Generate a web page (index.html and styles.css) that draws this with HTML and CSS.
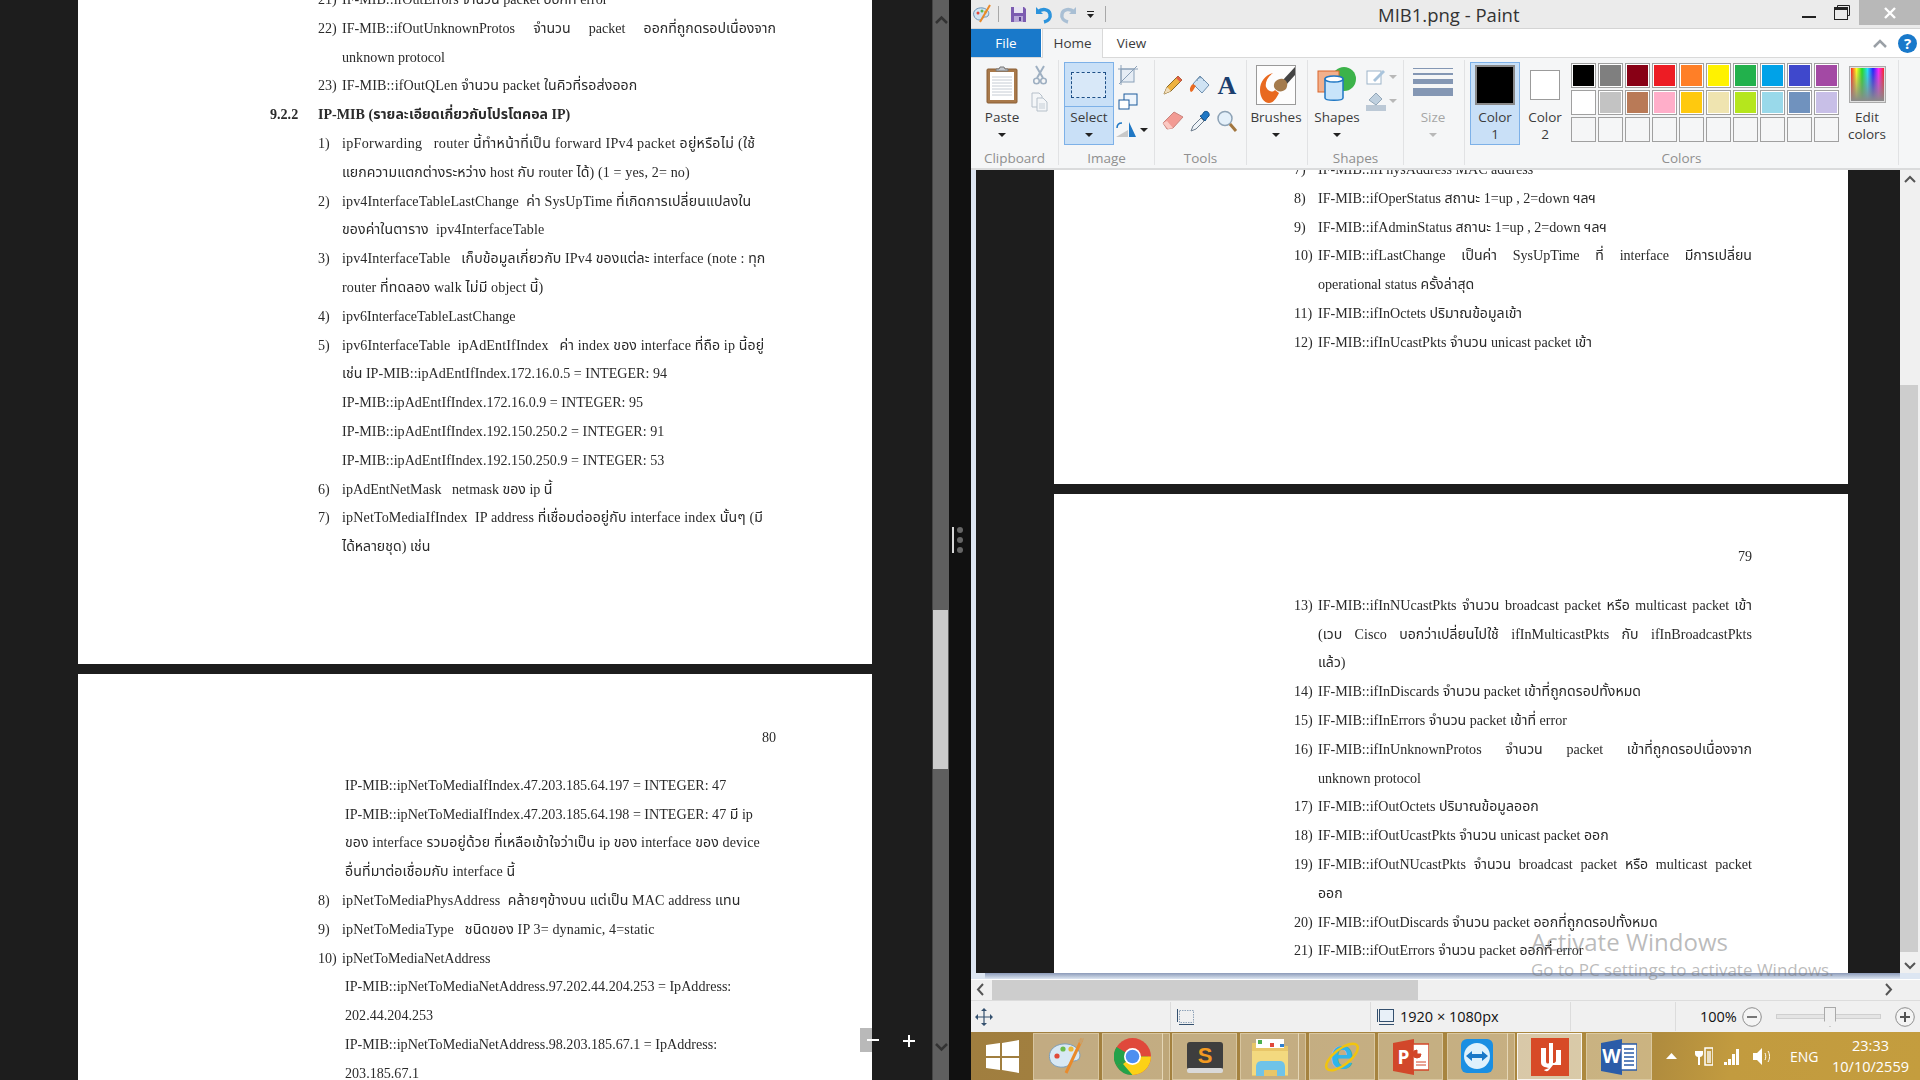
FILE: index.html
```html
<!doctype html>
<html>

<head>
    <title>MIB1.png - Paint</title>
    <meta charset="UTF-8">
    <link rel="stylesheet" href="styles.css">
</head>

<body>
    <div class="desk">
        <!-- pdf reader on the left half -->
        <section class="reader">
            <div class="reader-doc">
                <div class="page page-a">
                    <div class="ln"><span class="no">21)</span><span class="tx">IF-MIB::ifOutErrors จำนวน packet ออกที่ error</span></div>
                    <div class="ln"><span class="no">22)</span><span class="tx just">IF-MIB::ifOutUnknownProtos จำนวน packet ออกที่ถูกดรอปเนื่องจาก</span></div>
                    <div class="ln cont">unknown protocol</div>
                    <div class="ln w2"><span class="no">23)</span><span class="tx">IF-MIB::ifOutQLen จำนวน packet ในคิวที่รอส่งออก</span></div>
                    <div class="ln head"><span class="sec">9.2.2</span><span class="tx">IP-MIB (รายละเอียดเกี่ยวกับโปรโตคอล IP)</span></div>
                    <div class="ln w1"><span class="no">1)</span><span class="tx">ipForwarding   router นี้ทำหน้าที่เป็น forward IPv4 packet อยู่หรือไม่ (ใช้</span></div>
                    <div class="ln cont w2">แยกความแตกต่างระหว่าง host กับ router ได้) (1 = yes, 2= no)</div>
                    <div class="ln w2"><span class="no">2)</span><span class="tx">ipv4InterfaceTableLastChange  ค่า SysUpTime ที่เกิดการเปลี่ยนแปลงใน</span></div>
                    <div class="ln cont w2">ของค่าในตาราง  ipv4InterfaceTable</div>
                    <div class="ln w2"><span class="no">3)</span><span class="tx">ipv4InterfaceTable   เก็บข้อมูลเกี่ยวกับ IPv4 ของแต่ละ interface (note : ทุก</span></div>
                    <div class="ln cont w2">router ที่ทดลอง walk ไม่มี object นี้)</div>
                    <div class="ln"><span class="no">4)</span><span class="tx">ipv6InterfaceTableLastChange</span></div>
                    <div class="ln w2"><span class="no">5)</span><span class="tx">ipv6InterfaceTable  ipAdEntIfIndex   ค่า index ของ interface ที่ถือ ip นี้อยู่</span></div>
                    <div class="ln cont">เช่น IP-MIB::ipAdEntIfIndex.172.16.0.5 = INTEGER: 94</div>
                    <div class="ln cont">IP-MIB::ipAdEntIfIndex.172.16.0.9 = INTEGER: 95</div>
                    <div class="ln cont">IP-MIB::ipAdEntIfIndex.192.150.250.2 = INTEGER: 91</div>
                    <div class="ln cont">IP-MIB::ipAdEntIfIndex.192.150.250.9 = INTEGER: 53</div>
                    <div class="ln"><span class="no">6)</span><span class="tx">ipAdEntNetMask   netmask ของ ip นี้</span></div>
                    <div class="ln w2"><span class="no">7)</span><span class="tx">ipNetToMediaIfIndex  IP address ที่เชื่อมต่ออยู่กับ interface index นั้นๆ (มี</span></div>
                    <div class="ln cont">ได้หลายชุด) เช่น</div>
                </div>
                <div class="page page-b">
                    <div class="pageno">80</div>
                    <div class="ln sub">IP-MIB::ipNetToMediaIfIndex.47.203.185.64.197 = INTEGER: 47</div>
                    <div class="ln sub">IP-MIB::ipNetToMediaIfIndex.47.203.185.64.198 = INTEGER: 47 มี ip</div>
                    <div class="ln sub w2">ของ interface รวมอยู่ด้วย ที่เหลือเข้าใจว่าเป็น ip ของ interface ของ device</div>
                    <div class="ln sub w2">อื่นที่มาต่อเชื่อมกับ interface นี้</div>
                    <div class="ln w2"><span class="no">8)</span><span class="tx">ipNetToMediaPhysAddress  คล้ายๆข้างบน แต่เป็น MAC address แทน</span></div>
                    <div class="ln w2"><span class="no">9)</span><span class="tx">ipNetToMediaType   ชนิดของ IP 3= dynamic, 4=static</span></div>
                    <div class="ln"><span class="no">10)</span><span class="tx">ipNetToMediaNetAddress</span></div>
                    <div class="ln sub">IP-MIB::ipNetToMediaNetAddress.97.202.44.204.253 = IpAddress:</div>
                    <div class="ln sub">202.44.204.253</div>
                    <div class="ln sub">IP-MIB::ipNetToMediaNetAddress.98.203.185.67.1 = IpAddress:</div>
                    <div class="ln sub">203.185.67.1</div>
                </div>
                <div class="zoom-tools">
                    <span class="zoom-minus"></span>
                    <span class="zoom-plus"></span>
                </div>
            </div>
            <div class="reader-bar">
                <svg class="bar-up" width="17" height="12" viewBox="0 0 17 12"><path d="M3 9l5.500-5.500L14 9" fill="none" stroke="#333" stroke-width="2.500"/></svg>
                <div class="reader-thumb"></div>
                <svg class="bar-down" width="17" height="12" viewBox="0 0 17 12"><path d="M3 3l5.500 5.500L14 3" fill="none" stroke="#333" stroke-width="2.500"/></svg>
            </div>
            <div class="splitter">
                <span class="split-line"></span>
                <span class="split-dots"><i></i><i></i><i></i></span>
            </div>
        </section>

        <!-- paint window -->
        <section class="paint">
            <div class="titlebar">
                <div class="qat">
                    <svg width="20" height="20" viewBox="0 0 20 20"><path d="M2 12c-2-5 3-9 9-8 5 1 7 5 5 8-2 2-4 0-5 2-1 3-7 3-9-2z" fill="#cfe3f2" stroke="#6d93b5"/><circle cx="6" cy="9" r="1.500" fill="#e3483a"/><circle cx="10" cy="7" r="1.500" fill="#5cb84e"/><circle cx="13.500" cy="8" r="1.500" fill="#e8b93a"/><path d="M18 1L8 18" stroke="#e98a2b" stroke-width="2"/></svg>
                    <span class="qat-sep sep-a"></span>
                    <svg class="q-save" width="17" height="17" viewBox="0 0 17 17"><path d="M1 1h13l2 2v13H1z" fill="#7c5cb0"/><rect x="4" y="1" width="9" height="6" fill="#e8e4f2"/><rect x="4" y="10" width="9" height="6" fill="#b9a8d8"/><rect x="9" y="11" width="2" height="4" fill="#5a4390"/></svg>
                    <svg class="q-undo" width="19" height="19" viewBox="0 0 19 19"><path d="M2 2v7h7" fill="#2b93dc"/><path d="M4 7c4-4 11-3 12 2 1 4-2 7-6 8" fill="none" stroke="#2b93dc" stroke-width="3.500"/></svg>
                    <svg class="q-redo" width="19" height="19" viewBox="0 0 19 19"><path d="M17 2v7h-7" fill="#a9bfd4"/><path d="M15 7c-4-4-11-3-12 2-1 4 2 7 6 8" fill="none" stroke="#a9bfd4" stroke-width="3.500"/></svg>
                    <svg class="q-drop" width="9" height="9" viewBox="0 0 9 9"><path d="M1 1h7v1H1zM1 4h7L4.500 8z" fill="#222"/></svg>
                    <span class="qat-sep sep-b"></span>
                </div>
                <div class="title">MIB1.png - Paint</div>
                <div class="winbtns">
                    <span class="w-min"></span>
                    <svg class="w-max" width="16" height="15" viewBox="0 0 16 15"><path d="M3.500 2.500V.5h12v10h-2" fill="none" stroke="#222"/><rect x=".5" y="2.500" width="13" height="12" fill="none" stroke="#222"/><rect y="2" width="14" height="3" fill="#222"/></svg>
                    <span class="w-close"><svg width="12" height="12" viewBox="0 0 12 12"><path d="M1 1l10 10M11 1L1 11" stroke="#fff" stroke-width="2.400"/></svg></span>
                </div>
            </div>

            <div class="tabs">
                <span class="tab tab-file">File</span>
                <span class="tab tab-home">Home</span>
                <span class="tab tab-view">View</span>
                <span class="tab-right">
                    <svg width="14" height="9" viewBox="0 0 14 9"><path d="M1 8l6-6 6 6" fill="none" stroke="#9aa0a6" stroke-width="2.500"/></svg>
                    <span class="help">?</span>
                </span>
            </div>

            <div class="ribbon">
                <div class="group g-clip">
                    <div class="group-body">
                        <div class="big big-paste">
                            <svg width="32" height="38" viewBox="0 0 32 38"><rect x="1" y="3" width="30" height="34" rx="1" fill="#a9794a" stroke="#8a5e34"/><rect x="4" y="6" width="24" height="28" fill="#fff"/><path d="M6 11h20M6 14h20M6 17h20M6 20h20M6 23h20M6 26h20M6 29h20" stroke="#c6ccd4"/><path d="M10 5h12V3h-3l-1-2h-4l-1 2h-3z" fill="#c2c6cc" stroke="#777"/></svg>
                            <span class="lbl">Paste</span><span class="caret"></span>
                        </div>
                        <div class="stack">
                            <svg width="14" height="20" viewBox="0 0 14 20"><path d="M3 1l7 12M11 1L4 13" stroke="#9fb0c2" stroke-width="2"/><circle cx="3.500" cy="16" r="2.800" fill="none" stroke="#9fb0c2" stroke-width="1.600"/><circle cx="10.500" cy="16" r="2.800" fill="none" stroke="#9fb0c2" stroke-width="1.600"/></svg>
                            <svg width="17" height="20" viewBox="0 0 17 20"><path d="M1 1h7l3 3v11H1z" fill="#f4f6f8" stroke="#b6c0ca"/><path d="M6 6h6l4 4v9H6z" fill="#f4f6f8" stroke="#b6c0ca"/><path d="M8 12h6M8 14h6M8 16h6" stroke="#c5ced6"/></svg>
                        </div>
                    </div>
                    <div class="group-label">Clipboard</div>
                </div>

                <div class="group g-image">
                    <div class="group-body">
                        <div class="select-btn">
                            <div class="select-top"><span class="marquee"></span></div>
                            <div class="select-low"><span class="lbl">Select</span><span class="caret"></span></div>
                        </div>
                        <div class="stack image-stack">
                            <svg width="20" height="20" viewBox="0 0 20 20"><rect x="3" y="4" width="13" height="13" fill="#e6edf5" stroke="#8aa0b8"/><path d="M0 4h20M3 0v20M1 19L19 1" stroke="#8aa0b8"/></svg>
                            <svg width="20" height="18" viewBox="0 0 20 18"><rect x="6" y="1" width="13" height="11" fill="#eef5fc" stroke="#1d5b9c"/><rect x="1" y="7" width="10" height="9" fill="#fff" stroke="#1d5b9c"/></svg>
                            <div class="rotate"><svg width="22" height="17" viewBox="0 0 22 17"><path d="M1 16l12-7v7z" fill="#c8c8c8"/><path d="M14 16V1l7 15z" fill="#1f77c4"/><path d="M2 7c0-3 2-5 5-5" stroke="#1f77c4" fill="none" stroke-width="1.500"/></svg><span class="caret"></span></div>
                        </div>
                    </div>
                    <div class="group-label">Image</div>
                </div>

                <div class="group g-tools">
                    <div class="group-body tools-grid">
                        <svg width="22" height="22" viewBox="0 0 22 22"><path d="M2 20l3-7L16 2l4 4L9 17z" fill="#eeb23f" stroke="#8a6a2a"/><path d="M16 2l4 4-2 2-4-4z" fill="#e35d4a"/><path d="M2 20l3-7 4 4z" fill="#f1ddba"/></svg>
                        <svg width="22" height="22" viewBox="0 0 22 22"><path d="M11 2l9 9-7 8-9-9z" fill="#cfe3f4" stroke="#6e8fae"/><path d="M4 10c-3 2-4 6-2 8 2 0 3-4 5-6z" fill="#ea6b22"/><path d="M8 7c0-4 6-5 7 0" fill="none" stroke="#6e8fae"/></svg>
                        <svg class="tool-a-box" width="22" height="22" viewBox="0 0 22 22"><text x="11" y="20" text-anchor="middle" class="tool-a">A</text></svg>
                        <svg width="22" height="20" viewBox="0 0 22 20"><path d="M1 13L12 2l9 5-10 11-6 1z" fill="#f29b94" stroke="#c9837c"/><path d="M1 13l5 6 5-1-6-7z" fill="#fbc9c3"/></svg>
                        <svg width="22" height="22" viewBox="0 0 22 22"><path d="M2 21l2-5 8-8 3 3-8 8z" fill="#eef3f8" stroke="#6c7c8c"/><path d="M11 6l5 5 2-3 2-2c1-3-2-6-5-4l-2 3z" fill="#1f77c4" stroke="#17568f"/></svg>
                        <svg width="22" height="22" viewBox="0 0 22 22"><circle cx="9" cy="8.500" r="7" fill="#e4f0fa" stroke="#8ea3b6" stroke-width="1.500"/><path d="M14 14l6 7" stroke="#a2763f" stroke-width="3"/></svg>
                    </div>
                    <div class="group-label">Tools</div>
                </div>

                <div class="group g-brush">
                    <div class="group-body">
                        <div class="big">
                            <svg width="40" height="40" viewBox="0 0 40 40"><rect x=".5" y=".5" width="39" height="39" fill="#fdfdfd" stroke="#9a9a9a"/><path d="M39 2L26 16l4 4 9-10z" fill="#444"/><path d="M4 25c0-9 6-15 13-17-6 4-8 10-7 14 3 6 8 5 9 3l4 3c-3 6-6 10-10 10-5 0-9-6-9-13z" fill="#e8691f"/><path d="M18 22c-1-5 4-9 9-8 5 2 5 6 3 10-4 4-10 3-12-2z" fill="#a47b4d"/></svg>
                            <span class="lbl">Brushes</span><span class="caret"></span>
                        </div>
                    </div>
                </div>

                <div class="group g-shapes">
                    <div class="group-body">
                        <div class="big">
                            <svg width="40" height="38" viewBox="0 0 40 38"><circle cx="27" cy="13" r="12" fill="#3cb34a"/><rect x="1" y="5" width="21" height="21" fill="#f2b08c" stroke="#d9642a"/><path d="M8 13v19c0 3 18 3 18 0V13z" fill="#c8e4fa" stroke="#1f77c4" stroke-width="1.500"/><ellipse cx="17" cy="13" rx="9" ry="3" fill="#fff" stroke="#1f77c4" stroke-width="1.500"/></svg>
                            <span class="lbl">Shapes</span><span class="caret"></span>
                        </div>
                        <div class="stack shape-stack">
                            <div class="row"><svg width="20" height="17" viewBox="0 0 20 17"><rect x="1" y="3" width="14" height="13" fill="#fff" stroke="#9db4c9"/><path d="M7 12L17 2l2 2L9 14z" fill="#a9c4dc"/></svg><span class="caret dim"></span></div>
                            <div class="row"><svg width="20" height="20" viewBox="0 0 20 20"><rect x="0" y="14" width="20" height="6" fill="#bcc9d6"/><path d="M3 9l7-7 6 6-6 6z" fill="#bfd0df" stroke="#93a7b8"/></svg><span class="caret dim"></span></div>
                        </div>
                    </div>
                    <div class="group-label">Shapes</div>
                </div>

                <div class="group g-size">
                    <div class="group-body">
                        <div class="big dimmed">
                            <div class="size-lines"><i></i><i></i><i></i><i></i></div>
                            <span class="lbl">Size</span><span class="caret dim"></span>
                        </div>
                    </div>
                </div>

                <div class="group g-colors">
                    <div class="group-body">
                        <div class="colorbtn on">
                            <span class="chip chip-1"></span>
                            <span class="lbl">Color<br>1</span>
                        </div>
                        <div class="colorbtn color-two">
                            <span class="chip chip-2"></span>
                            <span class="lbl">Color<br>2</span>
                        </div>
                        <div class="palette">
                            <i class="c" style="background:#000000"></i><i class="c" style="background:#7f7f7f"></i><i class="c" style="background:#880015"></i><i class="c" style="background:#ed1c24"></i><i class="c" style="background:#ff7f27"></i><i class="c" style="background:#fff200"></i><i class="c" style="background:#22b14c"></i><i class="c" style="background:#00a2e8"></i><i class="c" style="background:#3f48cc"></i><i class="c" style="background:#a349a4"></i>
                            <i class="c" style="background:#ffffff"></i><i class="c" style="background:#c3c3c3"></i><i class="c" style="background:#b97a57"></i><i class="c" style="background:#ffaec9"></i><i class="c" style="background:#ffc90e"></i><i class="c" style="background:#efe4b0"></i><i class="c" style="background:#b5e61d"></i><i class="c" style="background:#99d9ea"></i><i class="c" style="background:#7092be"></i><i class="c" style="background:#c8bfe7"></i>
                            <i class="c"></i><i class="c"></i><i class="c"></i><i class="c"></i><i class="c"></i><i class="c"></i><i class="c"></i><i class="c"></i><i class="c"></i><i class="c"></i>
                        </div>
                        <div class="editcolors">
                            <span class="rainbow"></span>
                            <span class="lbl">Edit<br>colors</span>
                        </div>
                    </div>
                    <div class="group-label">Colors</div>
                </div>
            </div>

            <div class="workspace">
                <div class="canvas-row">
                    <div class="canvas">
                        <div class="page page-c">
                            <div class="ln"><span class="no">7)</span><span class="tx">IF-MIB::ifPhysAddress MAC address</span></div>
                            <div class="ln"><span class="no">8)</span><span class="tx">IF-MIB::ifOperStatus สถานะ 1=up , 2=down ฯลฯ</span></div>
                            <div class="ln"><span class="no">9)</span><span class="tx">IF-MIB::ifAdminStatus สถานะ 1=up , 2=down ฯลฯ</span></div>
                            <div class="ln"><span class="no">10)</span><span class="tx just">IF-MIB::ifLastChange เป็นค่า SysUpTime ที่ interface มีการเปลี่ยน</span></div>
                            <div class="ln cont">operational status ครั้งล่าสุด</div>
                            <div class="ln"><span class="no">11)</span><span class="tx">IF-MIB::ifInOctets ปริมาณข้อมูลเข้า</span></div>
                            <div class="ln"><span class="no">12)</span><span class="tx">IF-MIB::ifInUcastPkts จำนวน unicast packet เข้า</span></div>
                        </div>
                        <div class="page page-d">
                            <div class="pageno">79</div>
                            <div class="ln"><span class="no">13)</span><span class="tx just">IF-MIB::ifInNUcastPkts จำนวน broadcast packet หรือ multicast packet เข้า</span></div>
                            <div class="ln cont just">(เวบ Cisco บอกว่าเปลี่ยนไปใช้ ifInMulticastPkts กับ ifInBroadcastPkts</div>
                            <div class="ln cont">แล้ว)</div>
                            <div class="ln"><span class="no">14)</span><span class="tx">IF-MIB::ifInDiscards จำนวน packet เข้าที่ถูกดรอปทั้งหมด</span></div>
                            <div class="ln"><span class="no">15)</span><span class="tx">IF-MIB::ifInErrors จำนวน packet เข้าที่ error</span></div>
                            <div class="ln"><span class="no">16)</span><span class="tx just">IF-MIB::ifInUnknownProtos จำนวน packet เข้าที่ถูกดรอปเนื่องจาก</span></div>
                            <div class="ln cont">unknown protocol</div>
                            <div class="ln"><span class="no">17)</span><span class="tx">IF-MIB::ifOutOctets ปริมาณข้อมูลออก</span></div>
                            <div class="ln"><span class="no">18)</span><span class="tx">IF-MIB::ifOutUcastPkts จำนวน unicast packet ออก</span></div>
                            <div class="ln"><span class="no">19)</span><span class="tx just">IF-MIB::ifOutNUcastPkts จำนวน broadcast packet หรือ multicast packet</span></div>
                            <div class="ln cont">ออก</div>
                            <div class="ln"><span class="no">20)</span><span class="tx">IF-MIB::ifOutDiscards จำนวน packet ออกที่ถูกดรอปทั้งหมด</span></div>
                            <div class="ln"><span class="no">21)</span><span class="tx">IF-MIB::ifOutErrors จำนวน packet ออกที่ error</span></div>
                        </div>
                    </div>
                    <div class="vbar">
                        <svg width="20" height="12" viewBox="0 0 20 12"><path d="M5 9l5-5 5 5" fill="none" stroke="#555" stroke-width="2"/></svg>
                        <div class="vthumb"></div>
                        <svg width="20" height="12" viewBox="0 0 20 12"><path d="M5 3l5 5 5-5" fill="none" stroke="#555" stroke-width="2"/></svg>
                    </div>
                </div>
                <div class="canvas-edge"></div>
                <div class="hbar">
                    <svg width="21" height="19" viewBox="0 0 21 19"><path d="M12 4l-5 5.500 5 5.500" fill="none" stroke="#555" stroke-width="2"/></svg>
                    <div class="hthumb"></div>
                    <svg class="h-right" width="21" height="19" viewBox="0 0 21 19"><path d="M9 4l5 5.500-5 5.500" fill="none" stroke="#555" stroke-width="2"/></svg>
                </div>
                <div class="watermark">
                    <div class="wm-big">Activate Windows</div>
                    <div class="wm-small">Go to PC settings to activate Windows.</div>
                </div>
            </div>

            <div class="statusbar">
                <div class="st st-pos"><svg width="18" height="18" viewBox="0 0 18 18"><path d="M9 1v16M1 9h16" stroke="#34506e" stroke-width="1.200"/><path d="M9 0l3 3H6zM9 18l-3-3h6zM0 9l3-3v6zM18 9l-3 3V6z" fill="#34506e"/></svg></div>
                <div class="st st-sel"><svg width="19" height="18" viewBox="0 0 19 18"><rect x="3.500" y="2.500" width="14" height="12" fill="none" stroke="#8fa3b8" stroke-dasharray="1.500 1"/><path d="M1.500 1v13M3 16.500h15" stroke="#34506e"/></svg></div>
                <div class="st st-size"><svg width="19" height="18" viewBox="0 0 19 18"><rect x="3.500" y="1.500" width="14" height="12" fill="#e8f0f8" stroke="#34506e"/><path d="M1.500 1v13M3 16.500h15" stroke="#34506e"/></svg><span>1920 × 1080px</span></div>
                <div class="st st-gap"></div>
                <div class="st st-zoom">
                    <span class="pct">100%</span>
                    <svg width="20" height="20" viewBox="0 0 20 20"><circle cx="10" cy="10" r="9.300" fill="#f4f4f4" stroke="#8d8d8d"/><path d="M5 10h10" stroke="#777" stroke-width="2"/></svg>
                    <div class="slider"><span class="knob"></span></div>
                    <svg width="20" height="20" viewBox="0 0 20 20"><circle cx="10" cy="10" r="9.300" fill="#f4f4f4" stroke="#8d8d8d"/><path d="M5 10h10M10 5v10" stroke="#555" stroke-width="2"/></svg>
                </div>
            </div>

            <div class="taskbar">
                <div class="start">
                    <svg width="33" height="33" viewBox="0 0 33 33"><path d="M0 5l14-2v13H0zM16 3l17-3v16H16zM0 18h14v12L0 28zM16 18h17v15l-17-3z" fill="#fff"/></svg>
                </div>
                <div class="tb tb-1">
                    <svg width="36" height="38" viewBox="0 0 36 38"><path d="M2 22C-1 12 8 5 19 6c11 1 15 10 12 15-3 3-7 1-9 4-2 6-17 6-20-3z" fill="#d8e8f4" stroke="#7da0bd"/><circle cx="9" cy="18" r="2.600" fill="#e04a3a"/><circle cx="15" cy="11" r="2.600" fill="#6cbb4d"/><circle cx="23" cy="11" r="2.600" fill="#e9b83b"/><path d="M34 1L18 35" stroke="#e98a2b" stroke-width="3"/><path d="M36 0l-6 2 3 5z" fill="#c9a26d"/></svg>
                </div>
                <div class="tb tb-2 has-stack">
                    <svg width="37" height="37" viewBox="0 0 37 37"><circle cx="18.500" cy="18.500" r="18.500" fill="#e0483b"/><path d="M18.500 18.500L2.500 28A18.500 18.500 0 0 1 2.500 9z" fill="#24a24a"/><path d="M18.500 18.500L2.500 28A18.500 18.500 0 0 0 18.500 37L34 18.500z" fill="#24a24a"/><path d="M18.500 18.500H37A18.500 18.500 0 0 1 18.500 37L9 26z" fill="#fcd116"/><circle cx="18.500" cy="18.500" r="8.500" fill="#fff"/><circle cx="18.500" cy="18.500" r="6.800" fill="#4d8ff0"/></svg>
                </div>
                <div class="tb tb-3">
                    <svg width="38" height="34" viewBox="0 0 38 34"><rect x="1" y="2" width="36" height="28" rx="3" fill="#3e3e3e"/><rect x="1" y="28" width="36" height="5" rx="2" fill="#d9d9d9"/><text x="19" y="23" text-anchor="middle" class="subl-s">S</text></svg>
                </div>
                <div class="tb tb-4 has-stack2">
                    <svg width="40" height="40" viewBox="0 0 40 40"><path d="M2 6h14l3 3h19v30H2z" fill="#e8c668"/><rect x="6" y="2" width="28" height="9" fill="#fff"/><path d="M8 3h4v4H8z" fill="#4caf50"/><path d="M20 6h4v4h-4z" fill="#e0483b"/><path d="M30 7h4v3h-4z" fill="#2f7fd0"/><path d="M2 14h36v24H2z" fill="#f3d97f"/><path d="M6 39V30c0-4 2-6 6-6h18c3 0 5 2 5 6v9h-8v-4H14v4z" fill="#6fc3e8"/><rect x="14" y="33" width="13" height="6" fill="#e8c668"/></svg>
                </div>
                <div class="tb tb-5">
                    <svg width="38" height="38" viewBox="0 0 38 38"><text x="19" y="31" text-anchor="middle" class="ie-e">e</text><ellipse cx="19" cy="19" rx="19" ry="8" transform="rotate(-38 19 19)" fill="none" stroke="#f1c40f" stroke-width="2.500"/></svg>
                </div>
                <div class="tb tb-6">
                    <svg width="36" height="36" viewBox="0 0 36 36"><path d="M0 4l21-4v36L0 32z" fill="#d2472a"/><rect x="20" y="5" width="16" height="26" fill="#fff" stroke="#d2472a" stroke-width="1.500"/><path d="M24 11a4 4 0 1 0 4 4h-4zM23 23h10M23 26h10" stroke="#d2472a" fill="#d2472a"/><text x="10.500" y="25" text-anchor="middle" class="ms-l">P</text></svg>
                </div>
                <div class="tb tb-7 has-stack">
                    <svg width="36" height="38" viewBox="0 0 36 38"><rect x="1" y="1" width="32" height="34" rx="6" fill="#1a8fe3"/><circle cx="17" cy="18" r="13" fill="#dff1fc"/><path d="M6 18l6-5v3h10v-3l6 5-6 5v-3H12v3z" fill="#1a78c8"/></svg>
                </div>
                <div class="tb tb-8 active">
                    <svg width="38" height="38" viewBox="0 0 38 38"><rect width="38" height="38" fill="#d74a27"/><path d="M10 10h5v13c0 3 2 3 3 2V5h4v20c3 0 3-2 3-3V12h5v15H22l-4 5c-2 2-4 1-5 0l5-2c-4-1-8-1-8-6z" fill="#fff"/></svg>
                </div>
                <div class="tb tb-9">
                    <svg width="36" height="36" viewBox="0 0 36 36"><path d="M0 4l21-4v36L0 32z" fill="#2b5ca8"/><rect x="20" y="5" width="16" height="26" fill="#fff" stroke="#2b5ca8" stroke-width="1.500"/><path d="M23 10h10M23 14h10M23 18h10M23 22h10M23 26h10" stroke="#2b5ca8" stroke-width="1.500"/><text x="10.500" y="24" text-anchor="middle" class="ms-l">W</text></svg>
                </div>
                <div class="tray">
                    <svg class="t-up" width="11" height="6" viewBox="0 0 11 6"><path d="M0 6l5.500-6L11 6z" fill="#fff"/></svg>
                    <svg class="t-batt" width="18" height="20" viewBox="0 0 18 20"><path d="M2 0v5M6 0v5M0 5h8v3c0 2-2 3-3 3v8H3v-8c-1 0-3-1-3-3z" fill="#fff"/><rect x="10" y="2" width="8" height="17" fill="none" stroke="#fff" stroke-width="1.500"/><rect x="12" y="5" width="4" height="12" fill="#fff" opacity=".7"/></svg>
                    <svg class="t-sig" width="16" height="17" viewBox="0 0 16 17"><path d="M0 14h3v3H0zM4 11h3v6H4zM8 6h3v11H8zM12 1h3v16h-3z" fill="#fff"/></svg>
                    <svg class="t-vol" width="20" height="17" viewBox="0 0 20 17"><path d="M0 5h4l5-5v17l-5-5H0z" fill="#fff"/><path d="M12 5c1 2 1 5 0 7M15 3c2 3 2 8 0 11" fill="none" stroke="#fff"/></svg>
                    <span class="lang">ENG</span>
                    <span class="clock">23:33<br>10/10/2559</span>
                </div>
            </div>
        </section>
    </div>
</body>

</html>
```
FILE: styles.css
```css
* {
    box-sizing: border-box;
}

html,
body {
    margin: 0;
    height: 100%;
    overflow: hidden;
    background: #111;
}

.desk {
    display: flex;
    width: 1920px;
    height: 1080px;
    overflow: hidden;
    font-family: "Open Sans", "Noto Sans", sans-serif;
    color: #3b3b3b;
}

/* reader */
.reader {
    display: flex;
    width: 971px;
    flex: none;
    background: #111;
}

.reader-doc {
    position: relative;
    width: 932px;
    padding-left: 78px;
    background: #1d1d1d;
    overflow: hidden;
}

.reader-bar {
    display: flex;
    flex-direction: column;
    width: 17px;
    padding-top: 14px;
    background: #5f5f5f;
    border-left: 1px solid #444;
}

.reader-thumb {
    width: 15px;
    height: 159px;
    margin-top: 584px;
    background: #cccccc;
}

.bar-down {
    margin-top: 272px;
}

.splitter {
    position: relative;
    width: 22px;
}

.split-line {
    position: absolute;
    left: 3px;
    top: 527px;
    width: 2px;
    height: 26px;
    background: #d8d8d8;
}

.split-dots {
    position: absolute;
    left: 8px;
    top: 527px;
    display: flex;
    flex-direction: column;
    gap: 4px;
}

.split-dots i {
    width: 6px;
    height: 6px;
    border-radius: 50%;
    background: #666;
}

.zoom-minus {
    position: absolute;
    left: 860px;
    top: 1028px;
    width: 12px;
    height: 24px;
    background: #b9b9b9;
}

.zoom-minus::after {
    content: "";
    position: absolute;
    left: 7px;
    top: 11px;
    width: 12px;
    height: 2px;
    background: #fff;
}

.zoom-plus {
    position: absolute;
    left: 903px;
    top: 1040px;
    width: 12px;
    height: 2px;
    background: #fff;
}

.zoom-plus::after {
    content: "";
    position: absolute;
    left: 5px;
    top: -5px;
    width: 2px;
    height: 12px;
    background: #fff;
}

/* document pages */
.page {
    width: 794px;
    padding: 0 96px 0 240px;
    background: #fff;
    font-family: "Liberation Serif", "Noto Sans Thai", "Noto Serif Thai", serif;
    font-size: 14.1px;
    line-height: 28.8px;
    color: #2a2a2a;
    filter: blur(.35px);
}

.page-a {
    height: 679px;
    margin-top: -15px;
    margin-bottom: 10px;
}

.page-b {
    height: 420px;
}

.page-c {
    height: 329px;
    margin-top: -15px;
    margin-bottom: 10px;
}

.page-d {
    height: 500px;
}

.pageno {
    text-align: right;
}

.page-b .pageno {
    padding-top: 49px;
    margin-bottom: 19px;
}

.page-d .pageno {
    padding-top: 48px;
    margin-bottom: 20px;
}

.ln {
    display: flex;
    height: 28.8px;
    white-space: pre-wrap;
}

.w1 {
    letter-spacing: .3px;
}

.w2 {
    letter-spacing: .12px;
}

.no {
    flex: none;
    width: 24px;
    letter-spacing: 0;
}

.tx {
    flex: 1;
    white-space: pre;
}

.just {
    white-space: normal;
    text-align: justify;
    text-align-last: justify;
}

.cont {
    display: block;
    padding-left: 24px;
}

.sub {
    display: block;
    padding-left: 27px;
}

.head {
    margin-left: -48px;
    font-weight: bold;
}

.sec {
    flex: none;
    width: 48px;
}

/* paint window */
.paint {
    display: flex;
    flex-direction: column;
    width: 949px;
    flex: none;
    background: #ebebeb;
}

.titlebar {
    display: flex;
    align-items: flex-start;
    position: relative;
    height: 28px;
    flex: none;
    background: #ebebeb;
}

.qat {
    display: flex;
    align-items: center;
    height: 28px;
    padding-left: 1px;
}

.qat-sep {
    width: 1px;
    height: 16px;
    background: #a8a8a8;
}

.sep-a {
    margin-left: 6px;
}

.q-save {
    margin-left: 11px;
}

.q-undo {
    margin-left: 7px;
}

.q-redo {
    margin-left: 6px;
}

.q-drop {
    margin-left: 8px;
}

.sep-b {
    margin-left: 10px;
}

.title {
    position: absolute;
    left: 407px;
    top: 1px;
    font-size: 18.5px;
    line-height: 28px;
    color: #333;
}

.winbtns {
    display: flex;
    margin-left: auto;
}

.w-min {
    width: 14px;
    height: 2px;
    margin-top: 16px;
    background: #222;
}

.w-max {
    margin: 5px 9px 0 18px;
}

.w-close {
    display: flex;
    align-items: center;
    justify-content: center;
    width: 61px;
    height: 25px;
    background: #b8b8b8;
}

.tabs {
    display: flex;
    height: 30px;
    flex: none;
    background: #fff;
    border-top: 1px solid #d4d4d4;
    border-bottom: 1px solid #d9d9d9;
    font-size: 13.5px;
    line-height: 29px;
}

.tab {
    text-align: center;
}

.tab-file {
    width: 70px;
    margin-right: 1px;
    background: #1979ca;
    color: #fff;
}

.tab-home {
    width: 61px;
    height: 29px;
    background: #f5f6f7;
    border-left: 1px solid #d9d9d9;
    border-right: 1px solid #d9d9d9;
}

.tab-view {
    width: 57px;
}

.tab-right {
    display: flex;
    align-items: center;
    gap: 11px;
    margin-left: auto;
    padding-right: 3px;
}

.help {
    width: 19px;
    height: 19px;
    border-radius: 50%;
    background: #1979ca;
    color: #fff;
    font-weight: bold;
    font-size: 15px;
    line-height: 19px;
    text-align: center;
}

.ribbon {
    display: flex;
    height: 112px;
    flex: none;
    background: #f5f6f7;
    border-bottom: 2px solid #dadbdc;
    font-size: 13.5px;
    line-height: 17px;
}

.group {
    display: flex;
    flex-direction: column;
    flex: none;
    margin: 2px 0 3px;
    border-right: 1px solid #e1e2e4;
}

.g-clip { width: 88px; }
.g-image { width: 96px; }
.g-tools { width: 92px; }
.g-brush { width: 61px; }
.g-shapes { width: 96px; }
.g-size { width: 61px; }
.g-colors { width: 434px; }

.group-body {
    display: flex;
    flex: 1;
    min-height: 0;
    padding-top: 2px;
}

.group-label {
    height: 21px;
    padding-top: 4px;
    text-align: center;
    color: #8f8f8f;
    line-height: 20px;
}

.big {
    display: flex;
    flex-direction: column;
    align-items: center;
    flex: none;
    width: 58px;
    padding-top: 3px;
}

.big svg {
    flex: none;
    height: 40px;
    margin-bottom: 4px;
}

.big .lbl,
.select-low .lbl {
    height: 17px;
}

.caret {
    display: block;
    width: 0;
    height: 0;
    margin-top: 7px;
    border-left: 4px solid transparent;
    border-right: 4px solid transparent;
    border-top: 4px solid #222;
}

.caret.dim {
    border-top-color: #b8b8b8;
}

.big-paste {
    margin-left: 2px;
}

.stack {
    display: flex;
    flex-direction: column;
    align-items: center;
    gap: 7px;
    padding-top: 3px;
    margin-left: 0;
}

.select-btn {
    width: 50px;
    height: 83px;
    margin-left: 5px;
    background: #c9e0f7;
    border: 1px solid #7db1e8;
}

.select-top {
    height: 44px;
    padding: 9px 6px 0;
    border-bottom: 1px solid #7db1e8;
}

.marquee {
    display: block;
    width: 35px;
    height: 26px;
    border: 1px dashed #1d4f86;
    background: #d8e8f8;
}

.select-low {
    display: flex;
    flex-direction: column;
    align-items: center;
    padding-top: 2px;
}

.image-stack {
    width: 28px;
    margin-left: 0;
    gap: 8px;
    padding-top: 3px;
}

.rotate {
    display: flex;
    align-items: center;
    gap: 3px;
    margin-left: 6px;
    margin-top: 2px;
}

.rotate .caret {
    margin-top: 0;
}

.tools-grid {
    display: grid;
    grid-template-columns: repeat(3, 22px);
    grid-auto-rows: 36px;
    column-gap: 5px;
    align-content: start;
    padding: 14px 0 0 7px;
}

.tool-a-box {
    overflow: visible;
}

.tool-a {
    font-family: "Liberation Serif", serif;
    font-weight: bold;
    font-size: 26px;
    fill: #1c3f6e;
}

.shape-stack {
    gap: 6px;
    padding-top: 6px;
}

.row {
    display: flex;
    align-items: center;
    gap: 3px;
}

.row .caret {
    margin-top: 0;
}

.dimmed {
    color: #a6a6a6;
}

.size-lines {
    display: flex;
    flex-direction: column;
    gap: 4px;
    width: 40px;
    height: 40px;
    margin-top: 3px;
    margin-bottom: 4px;
    flex: none;
}

.size-lines i {
    display: block;
    background: #8497b4;
}

.size-lines i:nth-child(1) { height: 1px; }
.size-lines i:nth-child(2) { height: 2px; }
.size-lines i:nth-child(3) { height: 5px; }
.size-lines i:nth-child(4) { height: 8px; }

.g-size .size-lines {
    margin-bottom: 1px;
}

.colorbtn {
    display: flex;
    flex-direction: column;
    align-items: center;
    flex: none;
    width: 50px;
    height: 83px;
    margin-left: 5px;
    margin-right: 0;
    text-align: center;
    border: 1px solid transparent;
}

.color-two {
    margin-left: 0;
}

.colorbtn.on {
    background: #c9e0f7;
    border-color: #7db1e8;
}

.chip {
    display: block;
    flex: none;
}

.chip-1 {
    width: 40px;
    height: 40px;
    margin-top: 2px;
    margin-bottom: 4px;
    background: #000;
    border: 2px solid #c9e0f7;
    outline: 2px solid #8a8a8a;
    outline-offset: -2px;
}

.chip-2 {
    width: 30px;
    height: 30px;
    margin-top: 7px;
    margin-bottom: 9px;
    background: #fff;
    border: 1px solid #9b9b9b;
}

.palette {
    display: grid;
    grid-template-columns: repeat(10, 25px);
    grid-template-rows: repeat(3, 25px);
    column-gap: 2px;
    row-gap: 2px;
    margin-left: 1px;
    margin-top: 1px;
    flex: none;
}

.c {
    display: block;
    border: 1px solid #a0a0a0;
    box-shadow: inset 0 0 0 1px #fff;
}

.c:nth-child(n+21) {
    box-shadow: none;
    background: #f5f6f7;
}

.editcolors {
    display: flex;
    flex-direction: column;
    align-items: center;
    flex: none;
    width: 50px;
    margin-left: 3px;
    text-align: center;
}

.rainbow {
    display: block;
    width: 37px;
    height: 37px;
    margin-top: 4px;
    margin-bottom: 6px;
    border: 2px solid #e0e0e0;
    outline: 1px solid #aaa;
    outline-offset: -1px;
    background: linear-gradient(to bottom, transparent 0, #8a8a8a 100%), linear-gradient(to right, #ff2020, #ffff20, #20e020, #20e0ff, #2020ff, #ff20ff, #ff2020);
}

.workspace {
    position: relative;
    display: flex;
    flex-direction: column;
    flex: 1;
    min-height: 0;
    background: #dde6f2;
}

.canvas-row {
    display: flex;
    height: 803px;
    flex: none;
}

.canvas {
    flex: 1;
    margin-left: 5px;
    padding-left: 78px;
    background: #1d1d1d;
    overflow: hidden;
}

.vbar {
    display: flex;
    flex-direction: column;
    width: 20px;
    padding-top: 3px;
    background: #f0f0f0;
}

.vthumb {
    width: 18px;
    height: 567px;
    margin-top: 200px;
    background: #cdcdcd;
}

.vbar svg:last-child {
    margin-top: 8px;
}

.canvas-edge {
    height: 6px;
    flex: none;
    margin-left: 14px;
    margin-right: 20px;
    background: linear-gradient(to bottom, #8b9ab8, #dde6f2);
}

.hbar {
    display: flex;
    height: 22px;
    flex: none;
    background: #f0f0f0;
    border-top: 1px solid #fff;
    border-bottom: 1px solid #dcdcdc;
}

.hthumb {
    width: 426px;
    background: #cdcdcd;
}

.h-right {
    margin-left: auto;
    margin-right: 22px;
}

.watermark {
    position: absolute;
    left: 560px;
    top: 755px;
    color: rgba(120, 120, 120, .5);
    white-space: nowrap;
}

.wm-big {
    font-size: 24px;
    line-height: 33px;
}

.wm-small {
    font-size: 17px;
    line-height: 24px;
}

.statusbar {
    display: flex;
    height: 31px;
    flex: none;
    background: #f0f0f0;
    font-size: 14.5px;
    color: #111;
}

.st {
    display: flex;
    align-items: center;
    border-right: 1px solid #dcdcdc;
    margin: 1px 0;
}

.st-pos { width: 200px; padding-left: 4px; }
.st-sel { width: 200px; padding-left: 5px; }
.st-size { width: 200px; padding-left: 5px; gap: 5px; }
.st-gap { width: 105px; }

.st-zoom {
    flex: 1;
    border-right: none;
    padding-left: 24px;
}

.pct {
    width: 42px;
}

.slider {
    position: relative;
    width: 105px;
    height: 5px;
    margin: 0 14px;
    background: #e4e4e4;
    border: 1px solid #cfcfcf;
}

.knob {
    position: absolute;
    left: 47px;
    top: -8px;
    width: 12px;
    height: 20px;
    background: #efefef;
    border: 1px solid #a9a9a9;
    clip-path: polygon(0 0, 100% 0, 100% 70%, 50% 100%, 0 70%);
}

.taskbar {
    display: flex;
    align-items: center;
    height: 48px;
    flex: none;
    background: linear-gradient(100deg, #a07e3f 0, #a8853f 55%, #b08c3e 72%, #c29b3f 80%, #c49d3e 100%);
}

.start {
    display: flex;
    align-items: center;
    justify-content: center;
    flex: none;
    width: 62px;
    height: 48px;
    padding-top: 1px;
}

.tb {
    position: relative;
    display: flex;
    align-items: center;
    justify-content: center;
    flex: none;
    width: 66px;
    height: 47px;
    margin-top: 1px;
    margin-right: 3px;
    background: rgba(255, 255, 255, .35);
    border: 1px solid rgba(230, 215, 180, .6);
}

.tb-2 { width: 61px; margin-right: 9px; }
.tb-3 { width: 65px; }
.tb-4 { width: 59px; margin-right: 10px; }
.tb-6 { width: 65px; margin-right: 4px; }
.tb-7 { width: 61px; margin-right: 9px; }
.tb-8 { width: 65px; margin-right: 4px; }
.tb-9 { margin-right: 0; }

.has-stack::after,
.has-stack2::after {
    content: "";
    position: absolute;
    left: 100%;
    top: -1px;
    width: 6px;
    height: 47px;
    background: rgba(255, 255, 255, .3);
    border: 1px solid rgba(230, 215, 180, .6);
}

.active {
    background: rgba(255, 255, 255, .55);
    border-color: rgba(255, 255, 255, .8);
}

.subl-s {
    font-family: "Liberation Sans", sans-serif;
    font-weight: bold;
    font-size: 22px;
    fill: #f39a21;
}

.ie-e {
    font-family: "Liberation Sans", sans-serif;
    font-weight: bold;
    font-size: 42px;
    fill: #2fb5ea;
}

.ms-l {
    font-family: "Open Sans", sans-serif;
    font-weight: bold;
    font-size: 19px;
    fill: #fff;
}

.tray {
    display: flex;
    align-items: center;
    flex: 1;
    min-width: 0;
    height: 48px;
    color: #fff;
}

.t-up { margin-left: 14px; }
.t-batt { margin-left: 18px; }
.t-sig { margin-left: 11px; }
.t-vol { margin-left: 13px; }

.lang {
    margin-left: 17px;
    font-size: 14px;
}

.clock {
    margin-left: 8px;
    width: 88px;
    flex: none;
    font-size: 14.5px;
    line-height: 21px;
    text-align: center;
}
```
